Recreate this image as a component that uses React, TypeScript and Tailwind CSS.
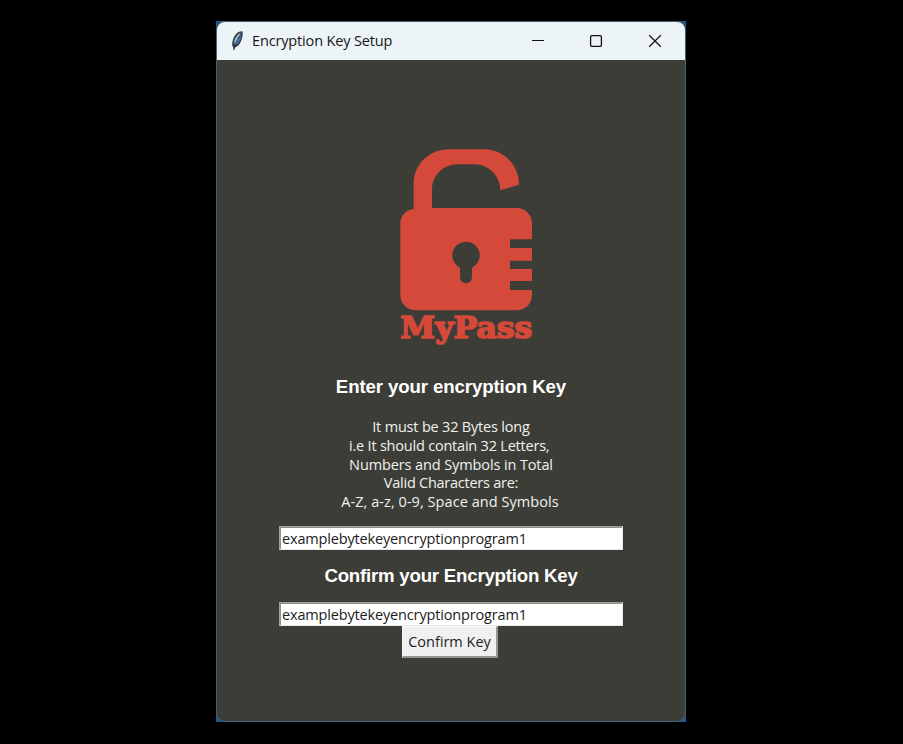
import React from "react";

const uiFont = "font-['Open_Sans','Noto_Sans',sans-serif]";
const headingFont = "font-['Liberation_Sans',Arial,sans-serif]";

function Feather() {
  return (
    <svg className="ml-[13px] h-[22px] w-[14px] shrink-0" viewBox="0 0 14 22">
      <path d="M12.4 1.2C8 1 4.700 4.500 3 9.500C2 12.700 1.700 15.500 3.200 17.500L4 20.500L5 17.500C8.500 16.500 10.500 13 11.800 9C12.600 6.500 13.100 3 12.400 1.200Z" fill="#343e4a" />
      <path d="M10.800 2.700C7.600 4 5.300 7 4.300 11L4.600 14.800C6.400 13 9.700 6.700 10.800 2.700Z" fill="#a3bed2" />
      <path d="M11.400 4C9.600 8.500 7.600 12 5.300 15.300C8 14.500 11 9.300 11.400 4Z" fill="#3d86d8" />
      <path d="M9.500 5.500C7.500 9 5 13 4 20" fill="none" stroke="#1e2732" strokeWidth="0.700" />
    </svg>
  );
}

function TitleBar() {
  return (
    <div className="flex h-[38px] shrink-0 items-center bg-[#edf4f8]">
      <Feather />
      <span className={`${uiFont} ml-[8px] whitespace-nowrap text-[14.5px] leading-5 tracking-[-0.15px] text-[#151719]`}>
        Encryption Key Setup
      </span>
      <svg className="ml-auto mr-[23px] h-[14px] w-[131px]" viewBox="0 0 131 14" fill="none" stroke="#111">
        <path d="M1 6.500H13" strokeWidth="1" />
        <rect x="59.600" y="1.600" width="10.800" height="10.800" rx="1.200" strokeWidth="1.300" />
        <path d="M118.200 1.200L129.800 12.800M129.800 1.200L118.200 12.800" strokeWidth="1.250" />
      </svg>
    </div>
  );
}

function Logo() {
  return (
    <svg className="ml-[168px] mt-[80px] h-[215px] w-[165px] shrink-0" viewBox="0 0 495 645" fill="#d5493b">
      <path d="M86 207V132C86 72 134 28 192 28H298C354 28 402 73 402 134L346 151C345 106 311 73 268 73H218C175 73 141 107 141 149V204H395C420 204 441 224 441 250V298H375V324H441V362H375V387H441V423H375V450H441V464C441 491 420 511 394 511H94C67 511 46 491 46 464V250C46 228 62 209 86 207Z" />
      <path d="M243 305A41 41 0 0 0 225 383V412A18 18 0 0 0 261 412V383A41 41 0 0 0 243 305Z" fill="#3d3d37" />
      <text
        x="46"
        y="594"
        fontFamily="'DejaVu Serif', serif"
        fontWeight="700"
        fontSize="90"
        textLength="396"
        lengthAdjust="spacingAndGlyphs"
        stroke="#d5493b"
        strokeWidth="5"
        strokeLinejoin="round"
      >
        MyPass
      </text>
    </svg>
  );
}

function Entry({ label }: { label: string }) {
  return (
    <input
      aria-label={label}
      defaultValue="examplebytekeyencryptionprogram1"
      className={`${uiFont} ml-[62px] h-[24px] w-[344px] shrink-0 rounded-none border border-[#a0a09d] border-b-[#e8e8e8] border-r-[#e8e8e8] bg-white pl-[2px] pt-px text-[14.5px] tracking-[-0.16px] text-[#1c1c1c] shadow-[inset_1px_1px_0_#8f8f8b] outline-none`}
    />
  );
}

export default function App() {
  return (
    <main className="flex h-[744px] w-[903px] items-start bg-black pl-[216px] pt-[21px]">
      <div className="h-[701px] w-[470px] bg-[#1d5a87]">
        <div className="flex h-[701px] flex-col overflow-hidden rounded-[9px] border border-[#416377] bg-[#3d3d37]">
          <TitleBar />
          <Logo />
          <h1 className={`${headingFont} mt-[21px] text-center text-[18.67px] font-bold leading-[22px] tracking-[-0.12px] text-white`}>
            Enter your encryption Key
          </h1>
          <div className={`${uiFont} mt-[20px] flex flex-col items-center whitespace-pre text-[14.5px] leading-[18.8px] text-[#f0f0ee]`}>
            <p className="tracking-[-0.19px]">It must be 32 Bytes long</p>
            <p className="tracking-[-0.21px]">{"i.e It should contain 32 Letters, "}</p>
            <p className="tracking-[-0.11px]">Numbers and Symbols in Total</p>
            <p className="tracking-[-0.25px]">Valid Characters are:</p>
            <p className="pr-[2px] tracking-[0.06px]">A-Z, a-z, 0-9, Space and Symbols</p>
          </div>
          <div className="mt-[14px] flex flex-col">
            <Entry label="Encryption key" />
            <h2 className={`${headingFont} my-[15px] text-center text-[18.67px] font-bold leading-[22px] tracking-[-0.22px] text-white`}>
              Confirm your Encryption Key
            </h2>
            <Entry label="Confirm encryption key" />
            <button className={`${uiFont} ml-[185px] h-[32px] w-[96px] whitespace-nowrap border border-b-2 border-r-2 border-b-[#96968f] border-l-[#fafafa] border-r-[#96968f] border-t-[#fafafa] bg-[#f0f0f0] text-[14.5px] text-[#1c1c1c]`}>
              Confirm Key
            </button>
          </div>
        </div>
      </div>
    </main>
  );
}
